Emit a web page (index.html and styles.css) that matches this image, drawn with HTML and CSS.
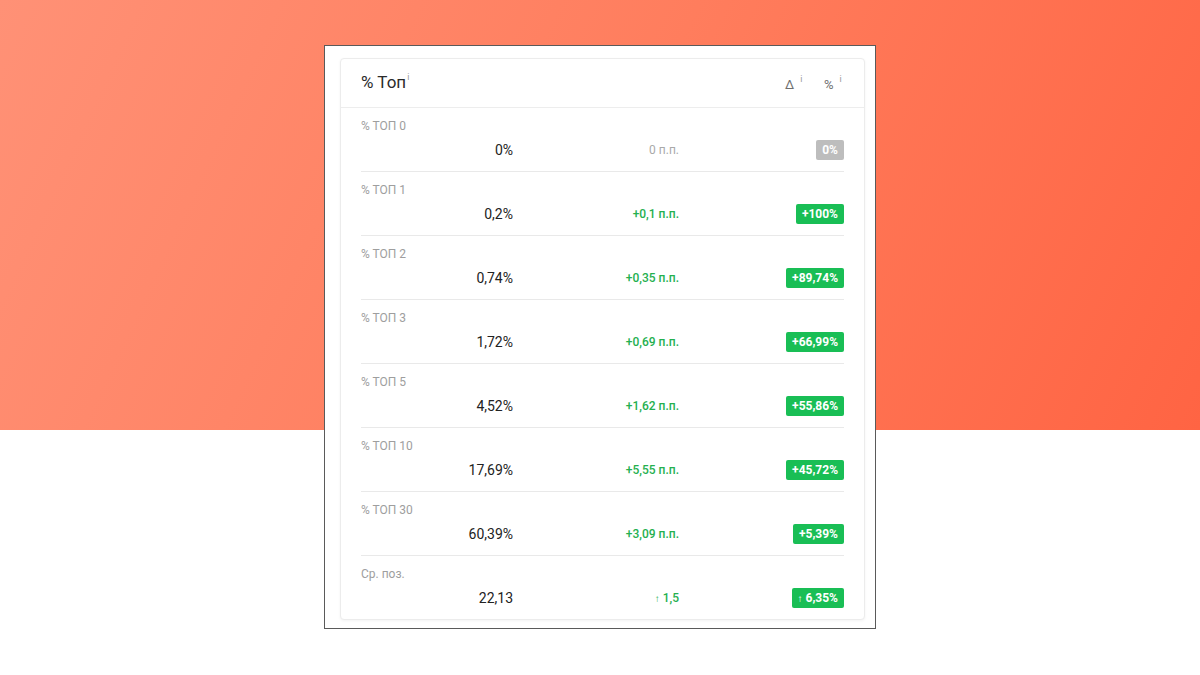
FILE: index.html
```html
<!DOCTYPE html>
<html lang="ru">
<head>
<meta charset="utf-8">
<link rel="stylesheet" href="styles.css">
</head>
<body>
<div class="frame">
  <div class="card">
    <div class="card-head">
      <div class="title">% Топ<sup class="info">i</sup></div>
      <div class="head-cols">
        <span class="hcol">∆<sup class="info">i</sup></span>
        <span class="hcol pct">%<sup class="info">i</sup></span>
      </div>
    </div>
    <div class="rows">
      <div class="row">
        <div class="label">% ТОП 0</div>
        <div class="vals"><span class="val">0%</span><span class="delta muted">0 п.п.</span><span class="cell"><span class="badge gray">0%</span></span></div>
      </div>
      <div class="row">
        <div class="label">% ТОП 1</div>
        <div class="vals"><span class="val">0,2%</span><span class="delta">+0,1 п.п.</span><span class="cell"><span class="badge">+100%</span></span></div>
      </div>
      <div class="row">
        <div class="label">% ТОП 2</div>
        <div class="vals"><span class="val">0,74%</span><span class="delta">+0,35 п.п.</span><span class="cell"><span class="badge">+89,74%</span></span></div>
      </div>
      <div class="row">
        <div class="label">% ТОП 3</div>
        <div class="vals"><span class="val">1,72%</span><span class="delta">+0,69 п.п.</span><span class="cell"><span class="badge">+66,99%</span></span></div>
      </div>
      <div class="row">
        <div class="label">% ТОП 5</div>
        <div class="vals"><span class="val">4,52%</span><span class="delta">+1,62 п.п.</span><span class="cell"><span class="badge">+55,86%</span></span></div>
      </div>
      <div class="row">
        <div class="label">% ТОП 10</div>
        <div class="vals"><span class="val">17,69%</span><span class="delta">+5,55 п.п.</span><span class="cell"><span class="badge">+45,72%</span></span></div>
      </div>
      <div class="row">
        <div class="label">% ТОП 30</div>
        <div class="vals"><span class="val">60,39%</span><span class="delta">+3,09 п.п.</span><span class="cell"><span class="badge">+5,39%</span></span></div>
      </div>
      <div class="row last">
        <div class="label">Ср. поз.</div>
        <div class="vals"><span class="val">22,13</span><span class="delta"><span class="arrow">↑</span> 1,5</span><span class="cell"><span class="badge"><span class="arrow">↑</span> 6,35%</span></span></div>
      </div>
    </div>
  </div>
</div>
</body>
</html>
```

FILE: styles.css
```css
* { box-sizing: border-box; }

html, body {
  margin: 0;
  padding: 0;
}

body {
  width: 1200px;
  height: 675px;
  overflow: hidden;
  font-family: Roboto, "Liberation Sans", Arial, sans-serif;
  background-color: #ffffff;
  background-image: linear-gradient(115deg, #ff9176 0%, #ff7d5d 50%, #ff6443 100%);
  background-size: 100% 430px;
  background-repeat: no-repeat;
  padding-top: 45px;
}

.frame {
  width: 552px;
  height: 584px;
  margin: 0 0 0 324px;
  background: #ffffff;
  border: 1px solid #5a5a5a;
  padding: 12px 10px 8px 15px;
}

.card {
  width: 525px;
  height: 562px;
  border: 1px solid #ececec;
  border-radius: 4px;
  box-shadow: 0 1px 3px rgba(0, 0, 0, 0.05);
  background: #fff;
}

.card-head {
  height: 49px;
  border-bottom: 1px solid #ededed;
  display: flex;
  align-items: center;
  justify-content: space-between;
  padding: 0 20px;
}

.title {
  font-size: 17px;
  color: #2b2b2b;
  margin-top: -3px;
}

.info {
  font-size: 9px;
  color: #9a9a9a;
  margin-left: 1px;
  vertical-align: 8px;
  line-height: 0;
}

.head-cols {
  display: flex;
  gap: 19px;
  font-size: 13px;
  color: #6f6f6f;
  padding-top: 3px;
}

.hcol {
  display: inline-block;
  width: 20px;
  white-space: nowrap;
}

.hcol .info {
  margin-left: 6px;
  vertical-align: 7px;
}

.rows {
  padding: 0 20px;
}

.row {
  height: 64px;
  border-bottom: 1px solid #e9e9e9;
  padding-top: 10px;
}

.row.last {
  border-bottom: none;
  height: 63px;
}

.label {
  font-size: 12px;
  line-height: 16px;
  color: #9e9e9e;
}

.vals {
  margin-top: 4px;
  height: 24px;
  display: grid;
  grid-template-columns: 152px 166px 165px;
  align-items: center;
}

.val {
  text-align: right;
  font-size: 14px;
  color: #222;
}

.delta {
  text-align: right;
  font-size: 12px;
  font-weight: 500;
  color: #25b04f;
}

.delta.muted {
  color: #a9a9a9;
  font-weight: 400;
}

.cell {
  display: flex;
  justify-content: flex-end;
}

.badge {
  display: inline-block;
  height: 20px;
  line-height: 20px;
  padding: 0 6px;
  border-radius: 2px;
  background: #19be55;
  color: #fff;
  font-size: 12px;
  font-weight: 700;
}

.badge.gray {
  background: #bdbdbd;
}

.arrow {
  font-size: 10px;
}
```
